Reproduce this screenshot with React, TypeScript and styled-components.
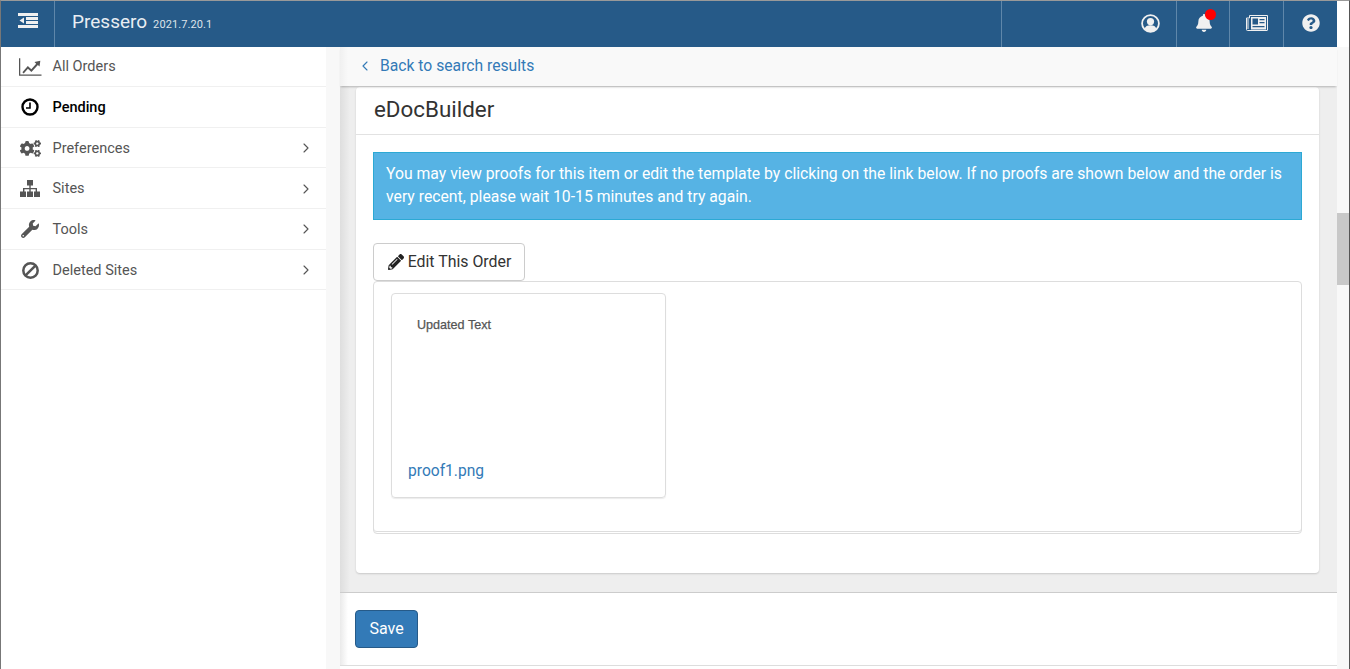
import React from 'react';
import styled, { createGlobalStyle } from 'styled-components';
import { FaBell, FaCogs, FaPencilAlt, FaQuestionCircle, FaWrench } from 'react-icons/fa';
import { LuChevronLeft, LuChevronRight } from 'react-icons/lu';

const Global = createGlobalStyle`
  html, body { margin: 0; padding: 0; background: #fff; overflow: hidden; }
  * { box-sizing: border-box; }
  body { font-family: Roboto, "Liberation Sans", sans-serif; }
`;
const Frame = styled.div`
  width: 1350px; height: 669px; display: flex; flex-direction: column; overflow: hidden;
  border-left: 1px solid #777; border-right: 1px solid #555; border-top: 1px solid #999; background: #fff;
`;
const Header = styled.header`
  height: 46px; flex: none; display: flex; align-items: stretch; background: #265a88; margin-right: 12px; color: #f0f0f0;
`;
const Menu = styled.div`
  width: 54px; display: flex; align-items: center; justify-content: center; border-right: 1px solid #5f87aa; padding: 0 0 7px 0;
`;
const Brand = styled.div`
  flex: 1; display: flex; align-items: baseline; padding: 9px 0 0 17px; font-size: 19px; color: #e9eef3;
  small { font-size: 11px; margin-left: 6px; letter-spacing: .1px; color: #dde4ea; }
`;
const HeaderCell = styled.div<{ $w: number }>`
  position: relative; width: ${p => p.$w}px; display: flex; align-items: center; justify-content: center;
  border-left: 1px solid #5f87aa; color: #f0f0f0; font-size: 18px; padding-bottom: 2px;
`;
const UserCell = styled(HeaderCell)`justify-content: flex-end; padding-right: 16px;`;
const BellCell = styled(HeaderCell)`padding-left: 1px;`;
const Dot = styled.span`
  position: absolute; top: 8px; left: 28px; width: 11px; height: 11px; border-radius: 50%; background: #f00;
`;
const Body = styled.div`flex: 1; min-height: 0; display: flex;`;
const Side = styled.nav`width: 325px; flex: none; background: #fff;`;
const Gutter = styled.div`width: 14px; flex: none; background: #f8f8f8;`;
const Item = styled.div<{ $active?: boolean }>`
  height: 40.7px; display: flex; align-items: center; border-bottom: 1px solid #f0f0f0; padding: 1px 12px 0 18px;
  font-size: 14.5px; color: ${p => (p.$active ? '#000' : '#555')}; font-weight: ${p => (p.$active ? 500 : 400)};
  &:first-child { height: 40px; padding-top: 0; }
  > svg { margin-left: auto; }
`;
const IconSlot = styled.span`width: 33.5px; display: flex; align-items: center; justify-content: center; padding-right: 11px; font-size: 20px;`;
const Main = styled.main`flex: 1; min-width: 0; display: flex; flex-direction: column;`;
const Right = styled.div`width: 12px; flex: none; background: #f8f8f8; position: relative;`;
const Thumb = styled.div`position: absolute; top: 166px; left: 0; width: 100%; height: 72px; background: #c8c8c8;`;
const SubBar = styled.div`
  height: 39px; flex: none; display: flex; align-items: center; padding: 0 0 2px 17px; gap: 7px;
  background: linear-gradient(90deg,#f0f0f0 0,#f9f9f9 8px);
  box-shadow: 0 2px 2px -1px rgba(0,0,0,.25); color: #337ab7; font-size: 15.7px; position: relative; z-index: 1;
`;
const Scroller = styled.div`
  height: 507px; flex: none; background: linear-gradient(90deg,#dedede 0,#eee 10px); padding: 1px 18px 0 16px; border-bottom: 1px solid #ccc;
`;
const Card = styled.section`
  height: 486px; background: #fff; border-radius: 4px; box-shadow: 0 1px 2px rgba(0,0,0,.16);
`;
const Title = styled.h2`
  margin: 0; height: 48px; padding: 8px 0 0 18px; font-weight: 400; font-size: 22.4px; line-height: 28px; color: #333; border-bottom: 1px solid #e2e2e2;
`;
const CardBody = styled.div`padding: 17px 17px 0; display: flex; flex-direction: column; align-items: flex-start;`;
const Alert = styled.div`
  width: 100%; height: 68px; padding: 9px 12px; background: #56b3e4; border: 1px solid #2ca9d4; color: #fff; font-size: 15.75px; line-height: 23px;
`;
const EditButton = styled.button`
  margin-top: 23px; height: 38px; width: 152px; display: flex; align-items: center; gap: 4px; justify-content: center; background: #fff;
  border: 1px solid #ccc; border-radius: 4px; color: #333; font: 400 15.9px Roboto, sans-serif; padding: 0 0 1px 1px;
`;
const Panel = styled.div`
  width: 100%; height: 253px; padding: 11px 17px 0; border: 1px solid #ddd; border-radius: 4px;
  box-shadow: inset 0 -1px 0 #fff, inset 0 -2px 0 #ddd;
`;
const Proof = styled.div`
  width: 275px; height: 205px; display: flex; flex-direction: column; border: 1px solid #ddd; border-radius: 4px; padding: 24px 0 15px 16px;
  box-shadow: 0 1px 1px rgba(0,0,0,.08);
`;
const Thumbnail = styled.div`flex: 1; padding-left: 9px; font: 400 12.6px "Liberation Sans", Arial, sans-serif; color: #555; -webkit-text-stroke: .25px #555;`;
const Link = styled.a`color: #337ab7; font-size: 15.6px; line-height: 22px;`;
const Footer = styled.div`
  height: 73px; flex: none; padding: 17px 0 0 15px; background: linear-gradient(90deg,#eaeaea 0,#fff 8px); border-bottom: 1px solid #ddd;
`;
const Save = styled.button`
  width: 63px; height: 38px; background: #337ab7; border: 1px solid #265a88; border-radius: 4px; color: #fff; font: 400 16px Roboto, sans-serif; padding: 0 0 1px;
`;

const MenuGlyph = () => (
  <svg width="20" height="15" viewBox="0 0 20 15" fill="#f0f0f0">
    <path d="M0 0h20v3H0zM8 4h12v3H8zM8 8h12v3H8zM0 12h20v3H0zM6 4.5v6L1.5 7.5z" />
  </svg>
);
const UserGlyph = () => (
  <svg width="19" height="19" viewBox="0 0 19 19">
    <circle cx="9.5" cy="9.5" r="8.4" fill="#265a88" stroke="#f0f0f0" strokeWidth="1.8" />
    <circle cx="9.5" cy="7.6" r="3.6" fill="#f0f0f0" />
    <path d="M3.6 15c.6-2.800 2.800-3.800 5.900-3.800s5.300 1 5.900 3.800a8 8 0 0 1-11.800 0z" fill="#f0f0f0" />
  </svg>
);
const NewsGlyph = () => (
  <svg width="22" height="16" viewBox="0 0 22 16">
    <path d="M3.500.5h18v14.500a.5.5 0 0 1-.5.5H1.500a1 1 0 0 1-1-1V3h3z" fill="none" stroke="#f0f0f0" />
    <path d="M2 4v10" stroke="#f0f0f0" strokeWidth="1" />
    <path d="M5 2h15v12.500H5z" fill="#f0f0f0" />
    <path d="M6.500 3.500h5.500v6H6.500zM13.500 4h5v1.300h-5zM13.500 7h5v1.300h-5zM6.500 11h12v1.300h-12z" fill="#265a88" />
  </svg>
);
const ChartGlyph = () => (
  <svg width="23" height="18" viewBox="0 0 23 18" fill="#555">
    <path d="M0 0h1.300v16.600H23V18H0z" />
    <path d="M3.500 14.300 9 8l3.600 3.300 5-5.600L15.800 4 21.800 2.600l-.8 6-1.700-1.700-6.600 7.300-3.600-3.300-4.300 4.800z" />
  </svg>
);
const ClockGlyph = () => (
  <svg width="18" height="18" viewBox="0 0 18 18" fill="none" stroke="#000">
    <circle cx="9" cy="9" r="7.500" strokeWidth="2.400" />
    <path d="M9 4.500V10H5" strokeWidth="1.600" />
  </svg>
);
const SitemapGlyph = () => (
  <svg width="20" height="17" viewBox="0 0 20 17" fill="#555">
    <path d="M7 0h6v5.500h-6zM0 11.500h6V17H0zM7 11.500h6V17H7zM14 11.500h6V17h-6z" />
    <path d="M9.300 5h1.400v3h6.300v4h-1.400V9.300h-4.900V12H9.300V9.300H4.400V12H3V8h6.300z" />
  </svg>
);
const BanGlyph = () => (
  <svg width="17" height="17" viewBox="0 0 17 17" fill="none" stroke="#555" strokeWidth="2.500">
    <circle cx="8.500" cy="8.500" r="7.200" />
    <path d="M13.700 3.300 3.300 13.700" />
  </svg>
);

const items = [
  { icon: <ChartGlyph />, label: 'All Orders' },
  { icon: <ClockGlyph />, label: 'Pending', active: true },
  { icon: <FaCogs size={21} />, label: 'Preferences', more: true },
  { icon: <SitemapGlyph />, label: 'Sites', more: true },
  { icon: <FaWrench size={18} />, label: 'Tools', more: true },
  { icon: <BanGlyph />, label: 'Deleted Sites', more: true },
];

export default function App() {
  return (
    <>
      <Global />
      <Frame>
        <Header>
          <Menu><MenuGlyph /></Menu>
          <Brand>Pressero <small>2021.7.20.1</small></Brand>
          <UserCell $w={175}><UserGlyph /></UserCell>
          <BellCell $w={53}><FaBell /><Dot /></BellCell>
          <HeaderCell $w={54}><NewsGlyph /></HeaderCell>
          <HeaderCell $w={54}><FaQuestionCircle /></HeaderCell>
        </Header>
        <Body>
          <Side>
            {items.map(it => (
              <Item key={it.label} $active={it.active}>
                <IconSlot>{it.icon}</IconSlot>
                {it.label}
                {it.more && <LuChevronRight size={16} strokeWidth={1.7} />}
              </Item>
            ))}
          </Side>
          <Gutter />
          <Main>
            <SubBar><LuChevronLeft size={16} strokeWidth={1.7} />Back to search results</SubBar>
            <Scroller>
              <Card>
                <Title>eDocBuilder</Title>
                <CardBody>
                  <Alert>You may view proofs for this item or edit the template by clicking on the link below. If no proofs are shown below and the order is very recent, please wait 10-15 minutes and try again.</Alert>
                  <EditButton><FaPencilAlt size={16} color="#222" />Edit This Order</EditButton>
                  <Panel>
                    <Proof>
                      <Thumbnail>Updated Text</Thumbnail>
                      <Link>proof1.png</Link>
                    </Proof>
                  </Panel>
                </CardBody>
              </Card>
            </Scroller>
            <Footer><Save>Save</Save></Footer>
          </Main>
          <Right><Thumb /></Right>
        </Body>
      </Frame>
    </>
  );
}
